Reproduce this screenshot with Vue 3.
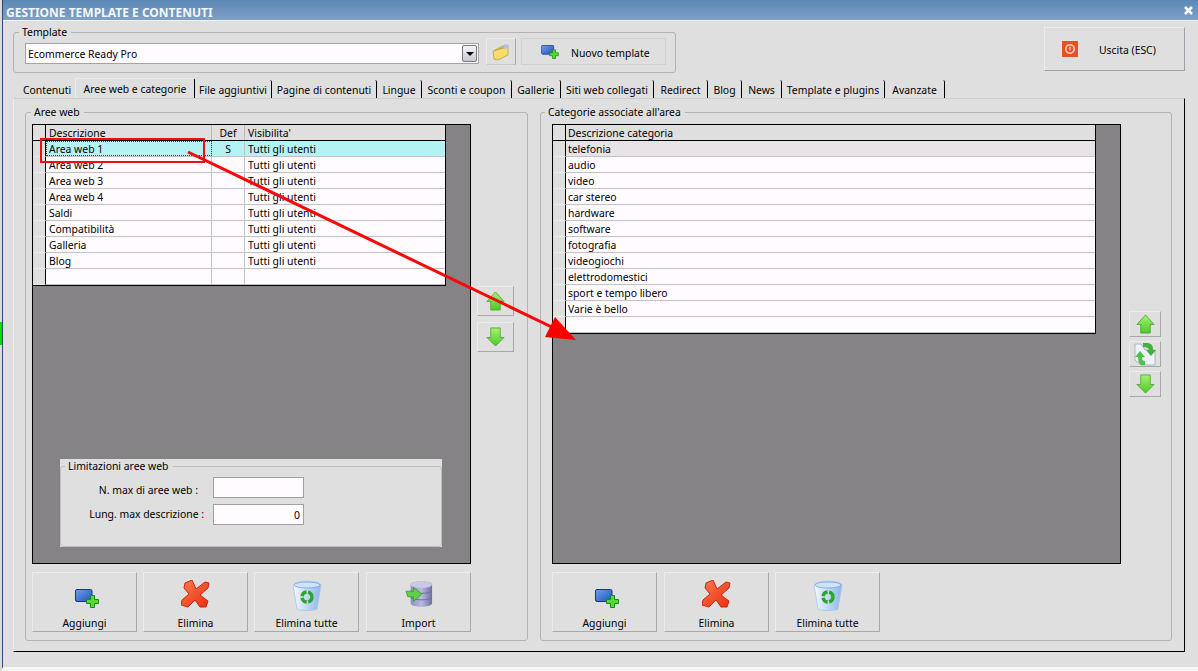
<script setup>
const tabs = [
  ['Contenuti', 62], ['Aree web e categorie', 120], ['File aggiuntivi', 77], ['Pagine di contenuti', 105],
  ['Lingue', 45], ['Sconti e coupon', 90], ['Gallerie', 49], ['Siti web collegati', 93], ['Redirect', 54],
  ['Blog', 34], ['News', 40], ['Template e plugins', 103], ['Avanzate', 60]
]
const areas = ['Area web 1', 'Area web 2', 'Area web 3', 'Area web 4', 'Saldi', 'Compatibilità', 'Galleria', 'Blog', '']
const cats = ['telefonia', 'audio', 'video', 'car stereo', 'hardware', 'software', 'fotografia', 'videogiochi', 'elettrodomestici', 'sport e tempo libero', 'Varie è bello', '']
</script>

<template>
  <div class="screen">
    <div class="desktop"><i class="green"></i></div>
    <div class="window">
      <header class="title">
        <span>GESTIONE TEMPLATE E CONTENUTI</span>
        <svg class="close" width="11" height="11" viewBox="0 0 11 11"><path d="M2 2l7 7M9 2l-7 7" stroke="#fff" stroke-width="2.6"/></svg>
      </header>

      <div class="top">
        <fieldset class="box tpl">
          <legend>Template</legend>
          <div class="select">
            <span>Ecommerce Ready Pro</span>
            <b class="drop"><i></i></b>
          </div>
          <button class="btn folder">
            <svg width="18" height="18" viewBox="0 0 18 18"><path d="M2 7l9-5 1 1 3-1v9l-9 5-3 1z" fill="#c9b96a"/><path d="M1 8l11-3 4-3v10l-10 5-4-1z" fill="#f7dc6a" stroke="#b69a38" stroke-width=".7"/><path d="M12 1l4 1v3l-4 1z" fill="#a8c4e8"/></svg>
          </button>
          <button class="btn newtpl">
            <svg width="18" height="14" viewBox="0 0 24 19"><use href="#addIcon"/></svg>
            <span>Nuovo template</span>
          </button>
        </fieldset>
        <button class="btn exit">
          <svg width="18" height="18" viewBox="0 0 18 18"><rect width="18" height="18" rx="1" fill="#e3e3e3"/><rect x="1" y="1" width="16" height="16" fill="#e94e27"/><circle cx="9" cy="9" r="4.2" fill="none" stroke="#fbd5c5" stroke-width="1.6"/><path d="M9 6.5v4" stroke="#fbd5c5" stroke-width="1.2"/></svg>
          <span>Uscita (ESC)</span>
        </button>
      </div>

      <nav class="tabs">
        <span v-for="(t, i) in tabs" :key="t[0]" class="tab" :class="{ on: i === 1, first: i === 0 }" :style="{ width: t[1] + 'px' }">{{ t[0] }}</span>
      </nav>

      <main class="panel">
        <fieldset class="box group left">
          <legend>Aree web</legend>
          <div class="grid-wrap">
            <div class="grid">
              <div class="row head l"><i></i><span>Descrizione</span><span class="c">Def</span><span>Visibilita'</span></div>
              <div v-for="(a, i) in areas" :key="i" class="row l" :class="{ sel: i === 0 }">
                <i></i><span :class="{ focus: i === 0 }">{{ a }}</span><span class="c">{{ i === 0 ? 'S' : '' }}</span><span>{{ a ? 'Tutti gli utenti' : '' }}</span>
              </div>
            </div>
            <div class="limits">
              <fieldset class="box">
                <legend>Limitazioni aree web</legend>
                <div class="lim-row"><label class="n">N. max di aree web :</label><input class="inp" /></div>
                <div class="lim-row"><label>Lung. max descrizione :</label><input class="inp" value="0" /></div>
              </fieldset>
            </div>
          </div>
          <div class="actions four">
            <button class="btn act"><svg class="add" width="24" height="19" viewBox="0 0 24 19"><use href="#addIcon"/></svg><span>Aggiungi</span></button>
            <button class="btn act"><svg width="29" height="28" viewBox="0 0 29 28"><use href="#delIcon"/></svg><span>Elimina</span></button>
            <button class="btn act"><svg width="30" height="31" viewBox="0 0 30 31"><use href="#binIcon"/></svg><span>Elimina tutte</span></button>
            <button class="btn act gap7"><svg width="28" height="28" viewBox="0 0 30 30"><defs><linearGradient id="db" x1="0" x2="1"><stop offset="0" stop-color="#8d8ec4"/><stop offset=".5" stop-color="#b9b9e0"/><stop offset="1" stop-color="#6f6f9e"/></linearGradient></defs><path d="M6 5c0-5 23-5 23 0v20c0 5-23 5-23 0z" fill="url(#db)"/><ellipse cx="17.5" cy="5" rx="11.5" ry="3.5" fill="#c9c9e6"/><path d="M6 12c4 3 19 3 23 0M6 19c4 3 19 3 23 0" stroke="#6a6a96" fill="none"/><path d="M1 12h8V8l9 7-9 8v-5H3z" fill="#5fcf45" stroke="#2a8f22" stroke-width=".7"/></svg><span>Import</span></button>
          </div>
          <div class="moves mleft">
            <button class="btn mv big"><svg width="21" height="20" viewBox="0 0 20 21"><use href="#upIcon"/></svg></button>
            <button class="btn mv big"><svg width="21" height="20" viewBox="0 0 20 21"><use href="#downIcon"/></svg></button>
          </div>
        </fieldset>

        <fieldset class="box group right">
          <legend>Categorie associate all'area</legend>
          <div class="grid-wrap">
            <div class="grid">
              <div class="row head r"><i></i><span>Descrizione categoria</span></div>
              <div v-for="(c, i) in cats" :key="i" class="row r" :class="{ cur: i === 0 }"><i></i><span>{{ c }}</span></div>
            </div>
          </div>
          <div class="actions">
            <button class="btn act"><svg class="add" width="24" height="19" viewBox="0 0 24 19"><use href="#addIcon"/></svg><span>Aggiungi</span></button>
            <button class="btn act gap7"><svg width="29" height="28" viewBox="0 0 29 28"><use href="#delIcon"/></svg><span>Elimina</span></button>
            <button class="btn act"><svg width="30" height="31" viewBox="0 0 30 31"><use href="#binIcon"/></svg><span>Elimina tutte</span></button>
          </div>
          <div class="moves mright">
            <button class="btn mv"><svg width="21" height="20" viewBox="0 0 20 21"><use href="#upIcon"/></svg></button>
            <button class="btn mv swap">
              <svg width="22" height="23" viewBox="0 0 22 23"><path d="M1 1h6l4 6h10v15H7l-6-5z" fill="#eef3fb" stroke="#9aa8c0" stroke-width=".8"/><path d="M9 0l5 0c4 1 5 3 5 7h3l-5 6-5-6h3c0-2-2-3-6-3z" fill="#3fb23a"/><path d="M1 14l5-6 5 6H8c0 3 1 4 3 4v4H7c-2-1-3-4-3-8z" fill="#4cc544"/></svg>
            </button>
            <button class="btn mv"><svg width="21" height="20" viewBox="0 0 20 21"><use href="#downIcon"/></svg></button>
          </div>
        </fieldset>
      </main>
    </div>

    <svg class="overlay" width="1198" height="671" viewBox="0 0 1198 671">
      <rect x="41" y="139" width="163" height="23" fill="none" stroke="#f01010" stroke-width="2"/>
      <path d="M188 152L560 331" stroke="#f80808" stroke-width="3" fill="none"/>
      <path d="M576 340L555 317L545 337z" fill="#fc0000"/>
    </svg>

    <svg class="defs" width="0" height="0">
      <defs>
        <linearGradient id="blue" x1="0" y1="0" x2="1" y2="1"><stop offset="0" stop-color="#6ea0ea"/><stop offset="1" stop-color="#1f54b8"/></linearGradient>
        <linearGradient id="red" x1="0" y1="0" x2="1" y2="1"><stop offset="0" stop-color="#ff7a50"/><stop offset="1" stop-color="#e62f10"/></linearGradient>
        <linearGradient id="green" x1="0" y1="0" x2="0" y2="1"><stop offset="0" stop-color="#a5f26e"/><stop offset="1" stop-color="#4ccb2a"/></linearGradient>
        <linearGradient id="glass" x1="0" y1="0" x2="1" y2="0"><stop offset="0" stop-color="#f6faff"/><stop offset="1" stop-color="#8cb6ea"/></linearGradient>
        <symbol id="addIcon" viewBox="0 0 24 19">
          <rect x=".5" y=".5" width="16.5" height="12" rx="1.5" fill="url(#blue)" stroke="#17338f"/>
          <path d="M15.5 6.5h4v4h4v4h-4v4h-4v-4h-4v-4h4z" fill="#54d936" stroke="#138a10"/>
        </symbol>
        <symbol id="delIcon" viewBox="0 0 29 28">
          <path d="M4 3l7-3 4 9 9-7 4 1-1 5-8 7 8 6-2 6-6 0-5-7-7 7-7-2 1-5 7-6-5-6z" fill="url(#red)" stroke="#c8290c" stroke-width="1"/>
        </symbol>
        <symbol id="binIcon" viewBox="0 0 30 31">
          <path d="M1 5c2-5 26-5 28 0l-4 24c-2 2-17 2-20 0z" fill="url(#glass)" stroke="#a8c6ea" stroke-width=".8"/>
          <ellipse cx="15" cy="5" rx="13" ry="3" fill="#cfe2fa" stroke="#7ba7dc" stroke-width=".8"/>
          <circle cx="15" cy="17" r="5" fill="none" stroke="#2ca62c" stroke-width="3.4" stroke-dasharray="6.5 1.5"/>
        </symbol>
        <symbol id="upIcon" viewBox="0 0 20 21">
          <path d="M10 1l9 10h-4v9H5v-9H1z" fill="url(#green)" stroke="#4a9a2c" stroke-width=".8"/>
        </symbol>
        <symbol id="downIcon" viewBox="0 0 20 21">
          <path d="M5 1h10v10h4l-9 9-9-9h4z" fill="url(#green)" stroke="#4a9a2c" stroke-width=".8"/>
        </symbol>
      </defs>
    </svg>
  </div>
</template>

<style>
html, body { margin: 0; overflow: hidden; }
</style>

<style scoped>
.screen {
  width: 1198px; height: 671px; position: relative; overflow: hidden; display: flex;
  font: 10.4px/13px "Noto Sans", Tahoma, sans-serif; color: #000; background: #f4f4f4;
}
.desktop { width: 2px; background: #dcdcdc; position: relative; flex: none; }
.green { position: absolute; left: 0; top: 322px; width: 2px; height: 23px; background: #00e000; }
.window { flex: 1; min-width: 0; height: 669px; background: #dfdfdf; border-left: 1px solid #2a4a6e; border-bottom: 2px solid #f8f8f8; box-sizing: border-box; display: flex; flex-direction: column; }
.title { height: 20px; flex: none; background: linear-gradient(#5c88b6, #7ea1c6); border-bottom: 1px solid #f2f2f2; display: flex; align-items: center; justify-content: space-between; padding: 0 4px 0 3px; color: #f4f6f8; font: bold 12px/20px "Noto Sans", sans-serif; }
.title span { padding-top: 5px; }

.box { border: 1px solid #b4b4b4; border-radius: 3px; margin: 0; padding: 0; min-width: 0; box-sizing: border-box; }
.box legend { padding: 0 4px 0 3px; line-height: 13px; }
.tpl legend { margin-left: -6px; line-height: 15px; }
.left > legend { margin-left: -1px; }
.right > legend { margin-left: -7px; }
.limits legend { margin-left: 4px; line-height: 15px; }

.btn { background: #dfdfdf; border: 1px solid; border-color: #ececec #a8a8a8 #a8a8a8 #ececec; padding: 0; margin: 0; font: inherit; color: #000; box-sizing: border-box; display: flex; align-items: center; justify-content: center; }

.top { display: flex; height: 49px; padding: 4px 13px 0 10px; box-sizing: border-box; flex: none; justify-content: space-between; }
.tpl { width: 663px; height: 48px; display: flex; align-items: flex-start; padding: 0 0 0 11px; }
.select { width: 454px; height: 21px; margin-top: 3px; border: 1px solid #a4a4a4; background: #fffbff; box-sizing: border-box; display: flex; align-items: center; justify-content: space-between; padding-left: 2px; }
.select span { padding-top: 2px; }
.drop { width: 15px; height: 17px; border: 1px solid #777; border-radius: 2px; background: linear-gradient(#f4f4fa, #c8c8d4); box-sizing: border-box; margin-right: 1px; display: flex; align-items: center; justify-content: center; }
.drop i { width: 0; height: 0; border: 4px solid transparent; border-top: 4px solid #000; border-bottom: 0; }
.folder { width: 30px; height: 27px; margin-left: 7px; margin-top: -2px; border-color: #ececec #a8a8a8 #c8c8c8 #ececec; }
.newtpl { width: 145px; height: 27px; margin-left: 5px; margin-top: -2px; border-color: #cfcfcf; justify-content: flex-start; padding-left: 19px; }
.newtpl span { margin-left: 12px; padding-top: 3px; }
.exit { width: 141px; height: 44px; margin-top: 2px; justify-content: flex-start; padding-left: 16px; border-color: #ececec #a0a0a8 #a0a0a8 #ececec; }
.exit span { margin-left: 20px; padding-top: 2px; }

.tabs { display: flex; height: 18px; padding-left: 10px; flex: none; margin-top: 10px; }
.tab { height: 18px; box-sizing: border-box; text-align: center; line-height: 20px; border-right: 1px solid #000; white-space: nowrap; flex: none; border-top-right-radius: 2px; }
.tab.first { border-right: 0; padding-left: 6px; }
.tab.on { border-left: 1px solid #ececec; border-top: 1px solid #ececec; border-radius: 2px 2px 0 0; margin-top: -2px; height: 20px; line-height: 20px; background: #dfdfdf; position: relative; }

.panel { flex: none; width: 1172px; height: 554px; margin-left: 10px; border: 1px solid; border-color: #cccccc #000 #000 #ececec; box-sizing: border-box; position: relative; display: flex; gap: 12px; padding: 8px 0 0 11px; }
.group { height: 535px; position: relative; padding: 5px 6px 0 6px; margin-top: -1px; }
.left { width: 503px; }
.right { width: 632px; padding-left: 11px; padding-right: 0; }
.grid-wrap { background: #858385; border: 1px solid #000; box-sizing: border-box; height: 440px; position: relative; }
.left .grid-wrap { width: 439px; }
.right .grid-wrap { width: 569px; }
.grid { background: #fffbff; border-bottom: 1px solid #000; border-right: 1px solid #000; }
.left .grid { width: 412px; }
.right .grid { width: 542px; }
.row { display: grid; height: 16px; box-sizing: border-box; border-bottom: 1px solid #c2c2c2; line-height: 16px; }
.row.l { grid-template-columns: 13px 166px 33px 1fr; }
.row.r { grid-template-columns: 13px 1fr; }
.row span { padding-left: 2px; border-right: 1px solid #c2c2c2; white-space: nowrap; overflow: hidden; }
.row.l span { padding-left: 3px; }
.row span:last-child { border-right: 0; }
.row .c, .row.l .c { text-align: center; padding: 0; }
.row i { background: #dfdfdf; border-right: 1px solid #000; border-bottom: 1px solid #ececec; margin-bottom: -1px; }
.head { background: #dfdfdf; border-bottom: 1px solid #000; }
.head span { border-right-color: #b8b8b8; }
.head i { border-bottom: 0; margin: 0; }
.sel { background: #b4f2f4; }
.cur { background: #e7e3e7; }
.focus { outline: 1px dotted #444; outline-offset: -1px; }

.limits { position: absolute; left: 27px; top: 334px; width: 382px; height: 88px; background: #dfdfdf; box-sizing: border-box; }
.limits .box { height: 88px; border-color: #bdbdbd; padding-top: 3px; }
.lim-row { display: flex; justify-content: flex-end; align-items: center; height: 21px; margin-bottom: 6px; padding-right: 137px; }
.lim-row label { margin-right: 9px; }
.lim-row label.n { margin-right: 15px; padding-top: 5px; }
.inp { width: 91px; height: 21px; box-sizing: border-box; border: 1px solid #a0a0a0; background: #fffbff; font: inherit; text-align: right; padding: 0 3px; outline: 0; }

.actions { display: flex; gap: 6px; margin-top: 8px; }
.gap7 { margin-left: 1px; }
.act { width: 105px; height: 60px; flex-direction: column; justify-content: flex-start; position: relative; padding-top: 7px; }
.act span { position: absolute; left: 0; right: 0; bottom: 1px; text-align: center; line-height: 14px; }
.act .add { margin: 9px 0 0 5px; }
.moves { position: absolute; display: flex; flex-direction: column; }
.mleft { left: 451px; top: 167px; gap: 6px; }
.mright { left: 588px; top: 192px; gap: 4px; }
.mv { width: 32px; height: 26px; }
.mv.big { width: 37px; height: 30px; }
.swap { overflow: hidden; }

.overlay { position: absolute; left: 0; top: 0; pointer-events: none; }
.defs { position: absolute; }
</style>
